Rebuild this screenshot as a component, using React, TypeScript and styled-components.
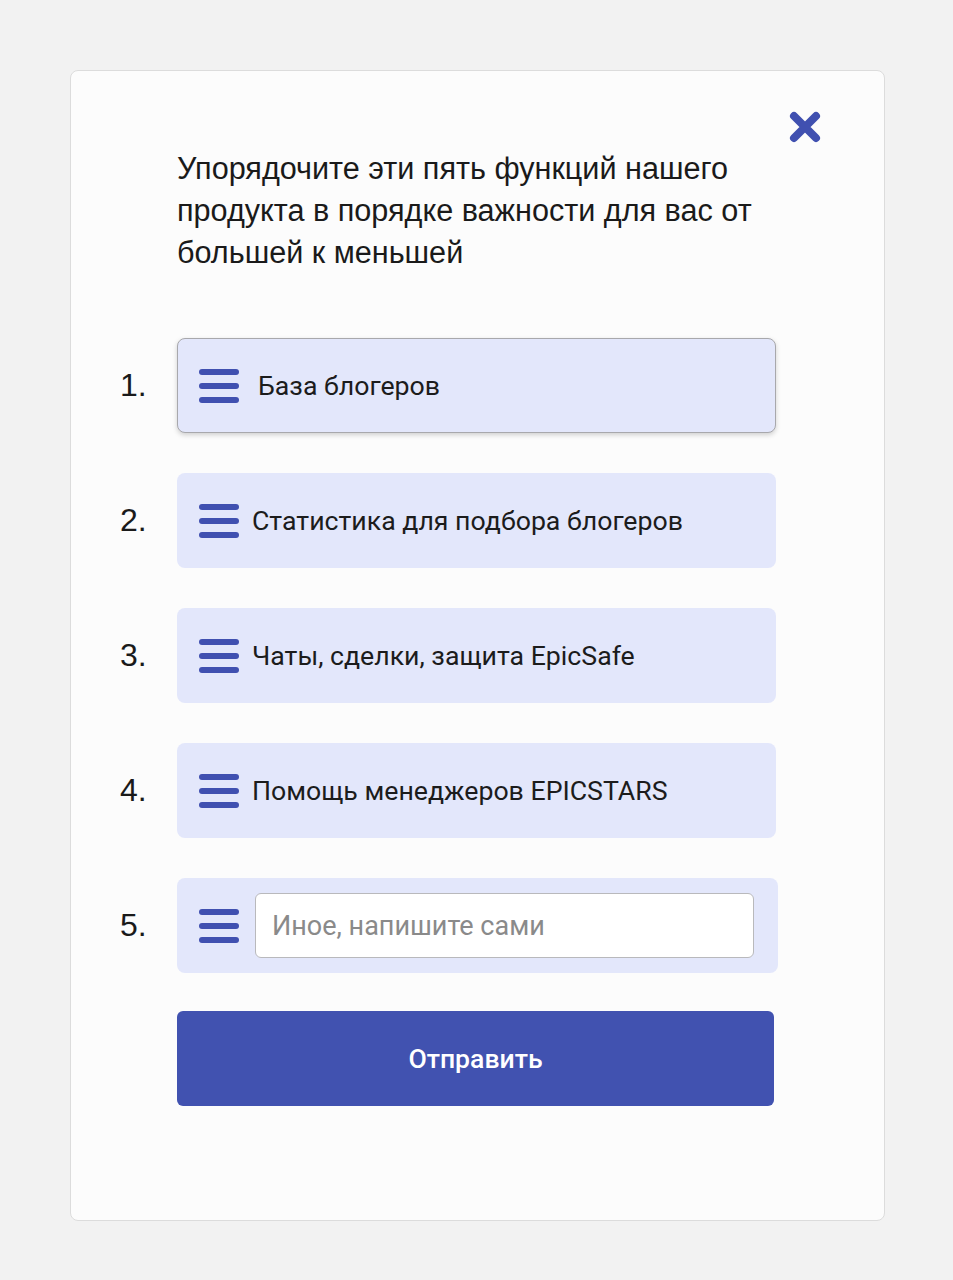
import styled, { createGlobalStyle } from "styled-components";

const GlobalStyle = createGlobalStyle`
  body {
    margin: 0;
    background: #f2f2f2;
    font-family: "Liberation Sans", Arial, sans-serif;
  }
`;

const Page = styled.div`
  padding: 70px 68px 58px 70px;
`;

const Card = styled.div`
  width: 815px;
  box-sizing: border-box;
  background: #fcfcfc;
  border: 1px solid #dcdcdc;
  border-radius: 8px;
  padding: 40px 63px 114px 49px;
`;

const Header = styled.div`
  display: flex;
  justify-content: flex-end;
  height: 36px;
`;

const CloseButton = styled.button`
  border: none;
  background: none;
  padding: 0;
  width: 32px;
  height: 32px;
  cursor: pointer;
  display: flex;
  align-items: center;
  justify-content: center;
`;

const Title = styled.h2`
  margin: 0 0 65px 57px;
  width: 599px;
  font-family: "Liberation Sans", Arial, sans-serif;
  font-weight: 400;
  font-size: 30.6px;
  line-height: 42px;
  color: #1a1a1a;
`;

const List = styled.ol`
  list-style: none;
  margin: 0;
  padding: 0;
  display: flex;
  flex-direction: column;
  gap: 40px;
`;

const Row = styled.li`
  display: flex;
  align-items: center;
`;

const Number = styled.span`
  width: 57px;
  font-family: "Liberation Sans", Arial, sans-serif;
  font-size: 32px;
  color: #1a1a1a;
`;

const Item = styled.div<{ $active?: boolean; $wide?: boolean }>`
  box-sizing: border-box;
  width: ${({ $wide }) => ($wide ? "601px" : "599px")};
  height: 95px;
  display: flex;
  align-items: center;
  gap: ${({ $active, $wide }) => ($active ? "19px" : $wide ? "16px" : "13px")};
  padding: 0 24px 0 ${({ $active }) => ($active ? "21px" : "22px")};
  background: #e3e7fb;
  border-radius: 8px;
  border: ${({ $active }) => ($active ? "1px solid #a8a8ac" : "none")};
  box-shadow: ${({ $active }) =>
    $active ? "0 2px 5px rgba(0, 0, 0, 0.18)" : "none"};
  cursor: grab;
`;

const Handle = styled.span`
  display: flex;
  flex-direction: column;
  gap: 8px;
  width: 40px;
  flex-shrink: 0;

  & > i {
    display: block;
    height: 6px;
    border-radius: 3px;
    background: #4050b0;
  }
`;

const Label = styled.span`
  font-family: Roboto, "Noto Sans", sans-serif;
  font-size: 26.7px;
  color: #1c1c1c;
`;

const OtherInput = styled.input`
  flex: 1;
  box-sizing: border-box;
  height: 65px;
  padding: 0 16px;
  border: 1.5px solid #b9b9bc;
  border-radius: 6px;
  background: #fff;
  font-family: Roboto, "Noto Sans", sans-serif;
  font-size: 27px;
  color: #1c1c1c;
  outline: none;

  &::placeholder {
    color: #8a8a8a;
  }
`;

const SubmitButton = styled.button`
  display: block;
  margin: 38px 0 0 57px;
  width: 597px;
  height: 95px;
  border: none;
  border-radius: 6px;
  background: #4152b0;
  color: #fff;
  font-family: Roboto, "Noto Sans", sans-serif;
  font-weight: 500;
  font-size: 26.6px;
  cursor: pointer;
`;

const features = [
  "База блогеров",
  "Статистика для подбора блогеров",
  "Чаты, сделки, защита EpicSafe",
  "Помощь менеджеров EPICSTARS",
];

const DragHandle = () => (
  <Handle>
    <i />
    <i />
    <i />
  </Handle>
);

export default function App() {
  return (
    <>
      <GlobalStyle />
      <Page>
        <Card>
          <Header>
            <CloseButton aria-label="Закрыть">
              <svg width="32" height="32" viewBox="0 0 32 32">
                <path
                  d="M5 5 L27 27 M27 5 L5 27"
                  stroke="#4050b0"
                  strokeWidth="8"
                  strokeLinecap="round"
                />
              </svg>
            </CloseButton>
          </Header>
          <Title>
            Упорядочите эти пять функций нашего продукта в порядке важности
            для вас от большей к меньшей
          </Title>
          <List>
            {features.map((f, i) => (
              <Row key={f}>
                <Number>{i + 1}.</Number>
                <Item $active={i === 0}>
                  <DragHandle />
                  <Label>{f}</Label>
                </Item>
              </Row>
            ))}
            <Row>
              <Number>5.</Number>
              <Item $wide>
                <DragHandle />
                <OtherInput placeholder="Иное, напишите сами" />
              </Item>
            </Row>
          </List>
          <SubmitButton>Отправить</SubmitButton>
        </Card>
      </Page>
    </>
  );
}
